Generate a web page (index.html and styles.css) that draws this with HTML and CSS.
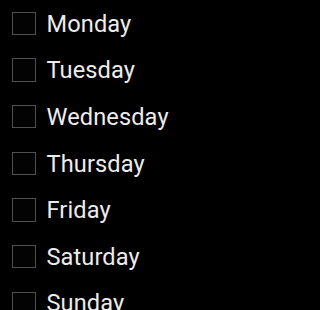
FILE: index.html
```html
<!DOCTYPE html>
<html>
<head>
<meta charset="utf-8">
<link rel="stylesheet" href="styles.css">
</head>
<body>
<ul class="list">
  <li class="row"><span class="box"></span><span class="label">Monday</span></li>
  <li class="row"><span class="box"></span><span class="label">Tuesday</span></li>
  <li class="row"><span class="box"></span><span class="label">Wednesday</span></li>
  <li class="row"><span class="box"></span><span class="label">Thursday</span></li>
  <li class="row"><span class="box"></span><span class="label">Friday</span></li>
  <li class="row"><span class="box"></span><span class="label">Saturday</span></li>
  <li class="row"><span class="box"></span><span class="label">Sunday</span></li>
</ul>
</body>
</html>
```
FILE: styles.css
```css
html, body {
  margin: 0;
  padding: 0;
  background: #000;
  overflow: hidden;
}
.list {
  list-style: none;
  margin: 0;
  padding: 0;
  font-family: Roboto, "Noto Sans", sans-serif;
}
.row {
  display: flex;
  align-items: center;
  height: 46.67px;
  padding-left: 12px;
}
.box {
  box-sizing: border-box;
  width: 23.5px;
  height: 23.5px;
  border: 1.5px solid #505050;
  background: #030303;
  flex: none;
}
.label {
  margin-left: 11px;
  padding-top: 2px;
  font-size: 23.6px;
  letter-spacing: 0.1px;
  color: #ececec;
  line-height: 1;
}
```
